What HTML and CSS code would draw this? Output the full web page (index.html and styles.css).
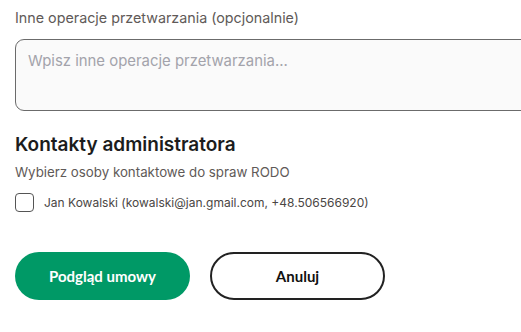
FILE: index.html
```html
<!DOCTYPE html>
<html lang="pl">
<head>
  <meta charset="UTF-8">
  <meta name="viewport" content="width=device-width, initial-scale=1.0">
  <title>Umowa powierzenia</title>
  <link rel="stylesheet" href="styles.css">
</head>
<body>
  <div class="form">
    <div class="field">
      <label class="field-label" for="ops">Inne operacje przetwarzania (opcjonalnie)</label>
      <textarea id="ops" class="field-input" placeholder="Wpisz inne operacje przetwarzania..."></textarea>
    </div>

    <div class="section">
      <h2>Kontakty administratora</h2>
      <p class="hint">Wybierz osoby kontaktowe do spraw RODO</p>
      <label class="check">
        <input type="checkbox">
        <span class="box"></span>
        <span>Jan Kowalski (kowalski@jan.gmail.com, +48.506566920)</span>
      </label>
    </div>

    <div class="actions">
      <button class="btn primary">Podgląd umowy</button>
      <button class="btn outline">Anuluj</button>
    </div>
  </div>
</body>
</html>
```

FILE: styles.css
```css
body {
  margin: 0;
  padding: 0;
  font-family: "Inter", "Noto Sans", sans-serif;
  background: #fff;
  color: #222;
  overflow: hidden;
}

.form {
  padding: 8px 0 0 15px;
  width: 506px;
}

.field-label {
  display: block;
  font-size: 14.3px;
  color: #5f5a58;
  line-height: 20px;
  margin-bottom: 11px;
}

.field-input {
  display: block;
  box-sizing: border-box;
  width: calc(100% + 40px);
  margin-right: -40px;
  height: 72px;
  padding: 12px 12px;
  border: 1px solid #6b6b6b;
  border-radius: 9px;
  background: #fafafa;
  font-family: inherit;
  font-size: 14.9px;
  resize: none;
}

.field-input::placeholder {
  color: #a3a3ab;
}

.section {
  margin-top: 22px;
}

h2 {
  margin: 0;
  font-size: 19px;
  font-weight: 600;
  line-height: 24px;
  color: #1c1c1c;
}

.hint {
  margin: 6px 0 0;
  font-size: 13.3px;
  line-height: 18px;
  color: #5f5a58;
}

.check {
  display: flex;
  align-items: center;
  gap: 10px;
  margin-top: 12px;
  font-size: 12px;
  color: #4a4644;
}

.check input {
  display: none;
}

.check .box {
  width: 17px;
  height: 17px;
  border: 1.5px solid #555;
  border-radius: 4px;
}

.actions {
  display: flex;
  gap: 20px;
  margin-top: 40px;
}

.btn {
  width: 175px;
  height: 48px;
  border-radius: 24px;
  font-family: "Lato", sans-serif;
  font-size: 15px;
  font-weight: 700;
  cursor: pointer;
}

.btn.primary {
  background: #009966;
  border: none;
  color: #fff;
}

.btn.outline {
  background: #fff;
  border: 2px solid #222;
  color: #111;
}
```
